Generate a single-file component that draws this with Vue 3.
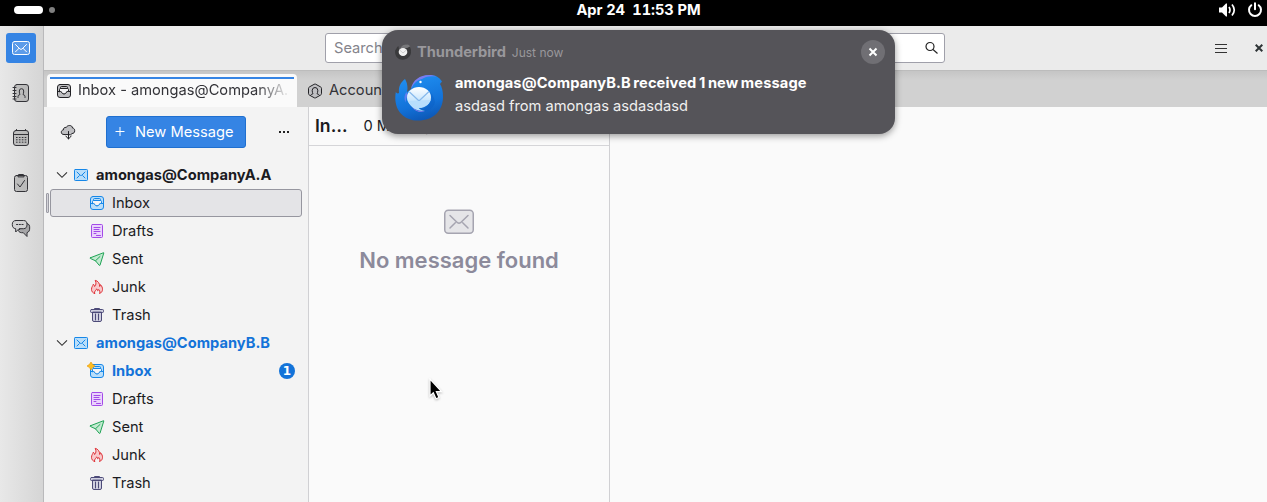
<script setup>
const spaces = [
  { id: 'book', size: 20 },
  { id: 'calendar', size: 20 },
  { id: 'tasks', size: 20 },
  { id: 'chat', size: 20 },
]
const children = (unread) => [
  { name: 'Inbox', icon: unread ? 'inbox-new' : 'inbox', tone: 'blue', unread },
  { name: 'Drafts', icon: 'draft', tone: 'purple' },
  { name: 'Sent', icon: 'sent', tone: 'green' },
  { name: 'Junk', icon: 'junk', tone: 'red' },
  { name: 'Trash', icon: 'trash', tone: 'slate' },
]
const accounts = [
  { name: 'amongas@CompanyA.A', unread: false, folders: children(0) },
  { name: 'amongas@CompanyB.B', unread: true, folders: children(1) },
]
</script>

<template>
  <div class="screen">
    <svg class="defs" aria-hidden="true">
      <symbol id="mail" viewBox="0 0 16 16"><rect x="1.5" y="2.5" width="13" height="11" rx=".8" /><path class="nf" d="M4 5l3.3 3.3q.7.6 1.4 0L12 5M4 11l2.3-2.3M12 11L9.700 8.700" /></symbol>
      <symbol id="mail-lg" viewBox="0 0 20 20"><rect x="1.500" y="3.500" width="17" height="13" rx="2" /><path class="nf" d="M4.500 6.500l4.500 4.500q1 .8 2 0l4.500-4.500M4.500 13.800l3.500-3.500M15.500 13.800L12 10.300" /></symbol>
      <symbol id="inbox" viewBox="0 0 16 16"><rect x="1.500" y="1.500" width="13" height="13" rx="2.500" /><path class="nf" d="M1.500 8.500h3.300c.5 0 .7.300.8.800.5 2 4.300 2 4.800 0 .1-.5.300-.8.800-.8h3.300" /><path class="in" d="M3.500 8.500V6.500q0-1 1-1h7q1 0 1 1v2h-1.300c-.5 0-.7.300-.8.800-.5 2-4.300 2-4.800 0-.1-.5-.3-.8-.8-.8z" /><path class="nf" d="M4.500 5.300v-.8q0-1 1-1h5q1 0 1 1v.8" /></symbol>
      <symbol id="draft" viewBox="0 0 16 16"><rect x="2.500" y="1.500" width="11" height="13" rx="1" /><path class="nf" d="M5 4.500h6M5 6.500h5M5 8.500h6M5 10.500h2M7.500 12.500h4" /></symbol>
      <symbol id="sent" viewBox="0 0 16 16"><path d="M1.300 6.800L14.600 1.700q.2 0 .2.300L11 14.200q-.2.500-.7.200L6.500 9.800 1.500 7.500q-.5-.300-.2-.7zM6.500 9.800L11 5.500" /></symbol>
      <symbol id="junk" viewBox="0 0 16 16"><path d="M5.500 14.500C3.500 13.800 2.500 12.300 2.500 10.300c0-2.300 1.300-3.100 1.800-5.100.9.600 1.200 1.300 1.300 2.300C7 6 7.500 4.300 6.200 1.300c2.700.7 4.600 3 4.500 6.200.6-.5.800-1.100.8-1.900 1.500 1.700 2 3.200 2 4.700 0 2-1 3.500-3 4.200.8-1.800.2-3.200-.8-4-.2.700-.5 1.100-1 1.300-.1-1-.5-1.600-1.100-2 .1 1.600-2.900 2-2.100 4.700z" /></symbol>
      <symbol id="trash" viewBox="0 0 16 16"><path d="M3.500 5.500v7.500q0 1.500 1.500 1.500h6q1.500 0 1.500-1.500V5.500zM2.500 2.500h11q1 0 1 1v1q0 1-1 1h-11q-1 0-1-1v-1q0-1 1-1zM5.500 2.500v-1h5v1M6.500 7v6M9.500 7v6" /></symbol>
      <symbol id="book" viewBox="0 0 20 20"><rect x="3.500" y="1.500" width="14" height="17" rx="2.500" /><path class="nf" d="M2 4.500h3M2 7.500h3M2 10.500h3M2 13.500h3M2 16h3" /><path class="nf" d="M7 14.500v-1q0-1.500 2-2Q8.300 10.500 8.300 8q0-2.300 2.200-2.300T12.700 8q0 2.500-.7 3.500 2 .5 2 2v1" /></symbol>
      <symbol id="calendar" viewBox="0 0 20 20"><rect x="2.500" y="2.500" width="15" height="15" rx="2.500" /><path class="nf" d="M2.500 6.500h15M5.500 1.500v1M14.500 1.500v1" /><path class="nf dots" d="M5 9.500h10.500M5 11.800h10.500M5 14.200h10.500" /></symbol>
      <symbol id="tasks" viewBox="0 0 20 20"><rect x="3.500" y="2.500" width="13" height="16" rx="2" /><path d="M7 3.500v-1q0-1 1-1h4q1 0 1 1v1z" /><path class="nf" d="M6.500 11l2.500 3 4.500-6.500" /></symbol>
      <symbol id="chat" viewBox="0 0 20 20"><path class="dark" d="M16 5.500c2.300.6 2.700 2 2.700 4.500 0 2.700-.8 4-2.700 4.600V18.500l-3.700-3.800c-2.600.2-4.100-.3-4.800-1.800z" /><path class="front" d="M5 2.500h7.500c2.600 0 3.500 1.500 3.500 4s-1 4.200-3.500 4.200H8L4.700 14v-3.300C2.300 10.500 1.300 9 1.300 6.500s1-4 3.700-4z" /><path class="nf" d="M5.500 6.500h1.200M8.200 6.500h1.200M10.900 6.500h1.200" /></symbol>
      <symbol id="cloud" viewBox="0 0 16 16"><path d="M5.500 10.500H4C2.300 10.500 1.300 9.700 1.300 8.200c0-1.300.8-2 2-2.200C3.300 4 4.500 3.200 6.300 3.400 7.200.9 12.300.6 12.500 4c1.600.3 2.200 1.200 2.200 2.700 0 1.900-1 2.800-2.700 2.800l-1 1z" /><path class="nf" d="M8.500 7.500V15M5.800 12l2.700 3 2.700-3" /></symbol>
      <symbol id="account" viewBox="0 0 16 16"><path d="M7.300 1.200q.7-.4 1.400 0l5 2.800q.8.500.8 1.300v5.400q0 .8-.8 1.300l-5 2.800q-.7.400-1.400 0L2.300 12q-.8-.5-.8-1.300V5.300q0-.8.800-1.300z" /><path d="M3.500 12.500q.5-1.300 2.500-1.800Q5.200 9.700 5.200 7.200 5.500 4.500 8 4.500t2.800 2.700q0 2.500-.8 3.500 2 .5 2.500 1.800" /></symbol>
    </svg>

    <header class="system">
      <div class="workspaces"><i class="pill"></i><i class="dot"></i></div>
      <span class="clock">Apr 24&ensp;11:53 PM</span>
      <div class="status">
        <svg width="18" height="16" viewBox="0 0 18 16"><path fill="#fff" d="M0 5.500h3L7 1.500h1v13H7l-4-4H0z" /><path fill="none" stroke="#fff" stroke-width="1.700" d="M10 5q2 3 0 6M13 2.500q4.500 5.500 0 11" /></svg>
        <svg width="16" height="16" viewBox="0 0 16 16"><path fill="none" stroke="#fff" stroke-width="2" stroke-linecap="round" d="M8 1.300v6M4.300 3.200a6 6 0 1 0 7.400 0" /></svg>
      </div>
    </header>

    <div class="body">
      <nav class="spaces">
        <div class="space active"><svg class="ic" width="20" height="20"><use href="#mail-lg" /></svg></div>
        <div v-for="s in spaces" :key="s.id" class="space"><svg class="ic" :width="s.size" :height="s.size"><use :href="'#' + s.id" /></svg></div>
      </nav>

      <div class="main">
        <div class="toolbar">
          <div class="search">
            <span>Search…</span>
            <svg width="14" height="14" viewBox="0 0 14 14"><g fill="none" stroke="#222" stroke-width="1.200"><circle cx="6" cy="5.500" r="4" /><path d="M9 8.500l4.500 4" /></g></svg>
          </div>
          <svg class="menu" width="12" height="11" viewBox="0 0 12 11"><path stroke="#333" d="M0 1.500h12M0 5.500h12M0 9.500h12" /></svg>
          <svg class="close" width="8" height="8" viewBox="0 0 8 8"><path stroke="#2e3436" stroke-width="2" d="M.7.700l6.600 6.600M7.300.700L.7 7.300" /></svg>
        </div>

        <div class="tabs">
          <div class="tab current">
            <svg class="ic gray" width="16" height="16"><use href="#inbox" /></svg>
            <span class="title">Inbox - amongas@CompanyA.</span>
          </div>
          <div class="tab">
            <svg class="ic gray" width="16" height="16"><use href="#account" /></svg>
            <span>Account Settings</span>
          </div>
        </div>

        <div class="panes">
          <section class="folders">
            <div class="actions">
              <svg class="ic gray" width="16" height="16"><use href="#cloud" /></svg>
              <button class="compose">
                <svg width="10" height="10" viewBox="0 0 10 10"><path stroke="#fff" d="M.5 4.500h9M5 0v9" /></svg>
                <span>New Message</span>
              </button>
              <svg class="more" width="12" height="4" viewBox="0 0 12 4"><path fill="#222" d="M1 1h2v2H1zM5 1h2v2H5zM9 1h2v2H9z" /></svg>
            </div>
            <template v-for="(a, i) in accounts" :key="a.name">
              <div class="row root" :class="{ fresh: a.unread }">
                <svg class="chev" width="12" height="8" viewBox="0 0 12 8"><path fill="none" stroke="#333" stroke-width="1.100" d="M1 1.300l5 5 5-5" /></svg>
                <svg class="ic blue" width="16" height="16"><use href="#mail" /></svg>
                <span>{{ a.name }}</span>
              </div>
              <div v-for="(f, j) in a.folders" :key="f.name" class="row" :class="{ selected: i === 0 && j === 0, fresh: f.unread }">
                <svg v-if="f.icon !== 'inbox-new'" class="ic" :class="f.tone" width="16" height="16"><use :href="'#' + f.icon" /></svg>
                <svg v-else class="ic blue new" width="18" height="18" viewBox="-2 -1 18 18"><use href="#inbox" width="16" height="16" /><path class="spark" d="M2-1q.9 2.800 4 4Q2.900 4.200 2 7 1.100 4.200-2 3 1.100 1.800 2-1z" /></svg>
                <span>{{ f.name }}</span>
                <b v-if="f.unread" class="badge">{{ f.unread }}</b>
              </div>
            </template>
          </section>

          <section class="messages">
            <div class="head"><strong>In…</strong><span>0 Messages</span></div>
            <div class="empty">
              <svg class="ic" width="30" height="26" viewBox="0 0 30 26"><rect x=".75" y="1.250" width="28.500" height="23" rx="3.500" /><path class="nf" d="M6 6.500l7.500 7.200q1.500 1.100 3 0L24 6.500M6 19l5.300-5.300M24 19l-5.300-5.300" /></svg>
              <p>No message found</p>
            </div>
          </section>
          <section class="preview"></section>
        </div>
      </div>
    </div>

    <aside class="toast">
      <div class="toast-head">
        <svg width="16" height="16" viewBox="0 0 48 48"><path fill="#3a3a3c" d="M10 6C3 12 4 18 1 17c-4 17 7 30 22 30 19 0 29-16 24-33l-3-7C38-1 20 0 15 15c-4 3-3-4-5-9z" /><path fill="#77777a" d="M15 15C20 2 30 1 40 2l6 5-8 4-12 3z" /><ellipse cx="24" cy="24" rx="13" ry="12" fill="#f2f2f2" /><path fill="none" stroke="#bbb" stroke-width="2" d="M14 18l10 9 10-9" /></svg>
        <strong>Thunderbird</strong><span>Just now</span>
        <div class="dismiss"><svg width="10" height="10" viewBox="0 0 10 10"><path stroke="#fff" stroke-width="2" d="M1.500 1.500l7 7M8.500 1.500l-7 7" /></svg></div>
      </div>
      <div class="toast-body">
        <svg width="48" height="48" viewBox="0 0 48 48">
          <defs>
            <linearGradient id="wing" x1=".3" y1="0" x2=".6" y2="1"><stop offset="0" stop-color="#2090f2" /><stop offset=".65" stop-color="#1272d9" /><stop offset="1" stop-color="#0d57b5" /></linearGradient>
            <linearGradient id="letter" x1="0" y1="0" x2="0" y2="1"><stop offset="0" stop-color="#fff" /><stop offset="1" stop-color="#a9d8fc" /></linearGradient>
          </defs>
          <path fill="url(#wing)" d="M10 5C5 9 3.500 13 4 19 2.500 20 1.500 19 .8 18-2 34 7 46.500 23 46.500 39 46.500 48 36 48 23 48 17 47 13 45 10l2-2.500C44 3 40 1 35 1 26 1 18 7 16 15l-4 3c1-4 .5-9-2-13z" />
          <path fill="#7a7cf0" d="M16 15C17.500 6 25 1 34 1c3 0 5 .5 7 1.500C34 1.500 30 3 27 5c-5 1-8 4-11 10z" />
          <path fill="#5d7df0" d="M11.500 18c-2.500 3-2.500 7-1 10.500.3-3 1-5 2.500-7.500z" />
          <path fill="#0c5fc6" d="M35 18c4 8-1 18-13 19 8 2 16-1 18-9-1-4-2-7-5-10z" opacity=".5" />
          <ellipse cx="24" cy="23.500" rx="12" ry="10.500" fill="url(#letter)" />
          <path fill="#b8defc" d="M13 27c3 7 8 10 17 10-4-1-6-2-6.500-3.500C30 33.500 34 30 35.500 26z" />
          <path fill="#8a7cf0" d="M17 33c3 3 7 5 13 4-3 2-10 1-13-4z" />
          <path fill="none" stroke="#86b9ec" stroke-width="1.200" d="M14.500 18l8.500 8q1 .8 2 0l9-8.500" />
          <circle cx="25.500" cy="8" r="1.200" fill="#fff" />
        </svg>
        <div class="copy"><strong>amongas@CompanyB.B received 1 new message</strong><span>asdasd from amongas asdasdasd</span></div>
      </div>
    </aside>

    <svg class="cursor" width="14" height="23" viewBox="0 0 14 23"><path fill="#000" stroke="#fff" stroke-width="1.200" d="M1 1v17l3.300-3.200 2.700 6 3-1.300-2.600-5.800H12.500z" /></svg>
  </div>
</template>

<style>
body { margin: 0; overflow: hidden; }
</style>

<style scoped>
.screen { position: relative; width: 1267px; height: 502px; overflow: hidden; display: flex; flex-direction: column; background: #fafafa; color: #1b1b1f; font: 14.667px/20px Inter, sans-serif; }
.defs { position: absolute; width: 0; height: 0; }
svg { flex: none; display: block; }
.ic { stroke: #333338; fill: #3333; stroke-linejoin: round; stroke-linecap: round; }
.ic.gray { stroke: #222226; fill: #bfbfc2; }
.ic.blue { stroke: #1687e8; fill: #b9defa; }
.ic.purple { stroke: #a34ae8; fill: #ead3fc; }
.ic.green { stroke: #1fa355; fill: #c3ead1; }
.ic.red { stroke: #df3238; fill: #f8c9cb; }
.ic.slate { stroke: #4c4a78; fill: #cfcfdf; }
.nf { fill: none; }
.in { fill: #f4f4f6; }
.dots { stroke-dasharray: 1.600 1.300; stroke-linecap: butt; }
.dark { fill: #a6a6a8; }
.front { fill: #d2d2d3; }

.system { flex: none; height: 26px; background: #000; color: #fff; display: grid; grid-template-columns: 1fr auto 1fr; align-items: center; padding: 0 4px 0 14px; box-sizing: border-box; }
.workspaces { display: flex; align-items: center; gap: 6px; padding-bottom: 6px; }
.pill { width: 29px; height: 8px; border-radius: 4px; background: #fff; }
.dot { width: 6px; height: 6px; border-radius: 50%; background: #808080; }
.clock { font-weight: 700; font-variant-numeric: tabular-nums; letter-spacing: -.07px; padding-bottom: 6px; }
.status { justify-self: end; display: flex; gap: 10px; padding-bottom: 6px; }

.body { flex: 1; display: flex; min-height: 0; }
.spaces { flex: none; width: 43px; box-sizing: border-box; background: linear-gradient(90deg, #e8e8e8, #d5d5d5); display: flex; flex-direction: column; align-items: center; gap: 15px; padding: 7px 1px 0 0; }
.space { width: 30px; height: 30px; border-radius: 3px; display: flex; align-items: center; justify-content: center; }
.active { background: #3584e4; }
.active .ic { stroke: #fff; fill: #fff3; }
.main { flex: 1; min-width: 0; display: flex; flex-direction: column; border-left: 1px solid #b9b9bb; }
.toolbar { flex: none; height: 45px; box-sizing: border-box; background: #ebebeb; border-bottom: 1px solid #bcbcbc; display: flex; align-items: center; padding-left: 281px; }
.search { width: 620px; height: 30px; box-sizing: border-box; border: 1px solid #a0a0aa; border-radius: 3px; background: #fff; color: #84848c; display: flex; align-items: center; justify-content: space-between; padding: 0 6px 0 8px; }
.menu { margin-left: 270px; }
.close { margin-left: 28px; }
.tabs { flex: none; height: 36px; background: linear-gradient(#c5c5c5, #d1d1d1 9px); display: flex; padding-left: 3px; align-items: flex-end; }
.tab { height: 33px; box-sizing: border-box; display: flex; align-items: center; gap: 6px; padding-left: 10px; color: #333338; white-space: nowrap; }
.tab span { padding-bottom: 1px; }
.current { width: 250px; background: linear-gradient(#3584e4, #3584e4) 3px 3px / 244px 2px no-repeat #fafafa; border-radius: 4px 4px 0 0; padding-right: 9px; padding-left: 9px; }
.title { flex: 1; min-width: 0; mask-image: linear-gradient(90deg, #000 178px, transparent 212px); }
.panes { flex: 1; min-height: 0; display: flex; }
.folders { flex: none; width: 264px; background: #f3f3f3; border-right: 1px solid #d0d0d3; }
.actions { height: 54px; box-sizing: border-box; display: flex; align-items: center; padding: 0 18px 4px 16px; }
.compose { margin-left: 30px; width: 140px; height: 32px; box-sizing: border-box; padding: 0 0 0 8px; border: 1px solid #1f6fcf; border-radius: 3px; background: #3584e4; color: #fff; font: inherit; display: flex; align-items: center; gap: 10px; }
.more { margin-left: 32px; }
.row { height: 28px; margin: 0 6px; padding: 0 6px 0 38px; border: 1px solid transparent; border-radius: 3px; box-sizing: border-box; display: flex; align-items: center; gap: 7px; position: relative; white-space: nowrap; }
.root { padding-left: 5px; font-weight: 700; }
.root .chev { margin-right: -2px; }
.fresh { color: #1373d9; font-weight: 700; }
.selected { background: #e4e4e7; border-color: #96969f; }
.selected::before { content: ""; position: absolute; left: -5px; top: 3px; width: 1px; height: 18px; border: 1px solid #9b9ba4; border-radius: 1px; background: #d5d5da; }
.new { margin-left: -2px; }
.spark { fill: #ffbd21; stroke: #e89700; stroke-width: .6; }
.badge { margin-left: auto; width: 16px; height: 16px; border-radius: 50%; background: #1373d9; color: #fff; font-family: "DejaVu Sans", sans-serif; font-size: 12px; line-height: 16px; text-align: center; }
.messages { flex: none; width: 300px; border-right: 1px solid #d0d0d3; background: #fafafa; }
.head { height: 39px; box-sizing: border-box; border-bottom: 1px solid #d5d5d8; padding-left: 6px; display: flex; align-items: center; gap: 16px; }
.head strong { font-size: 17.600px; font-weight: 600; }
.empty { display: flex; flex-direction: column; align-items: center; padding-top: 63px; color: #8c8a9b; }
.empty .ic { stroke: #a5a4b0; fill: #e5e5e8; stroke-width: 1.500; }
.empty p { margin: 11px 0 0; font-size: 22px; line-height: 28px; font-weight: 600; }
.preview { flex: 1; background: #fafafa; }

.toast { position: absolute; left: 382px; top: 30px; width: 513px; height: 104px; box-sizing: border-box; border-radius: 16px; background: #555459; box-shadow: 0 2px 7px #0006; color: #fff; }
.toast-head { height: 44px; display: flex; align-items: center; padding: 0 10px 0 13px; color: #99989c; }
.toast-head strong { margin: 0 6px 0 6px; font-weight: 700; letter-spacing: -.05px; }
.toast-head span { font-size: 12px; padding-top: 1px; }
.dismiss { margin-left: auto; width: 24px; height: 24px; border-radius: 50%; background: #706f74; display: flex; align-items: center; justify-content: center; }
.toast-body { display: flex; gap: 12px; padding-left: 13px; }
.copy { display: flex; flex-direction: column; gap: 3px; margin-top: -1px; white-space: nowrap; }
.copy strong { font-weight: 700; letter-spacing: .1px; word-spacing: -1px; }
.copy span { color: #f0f0f0; }
.cursor { position: absolute; left: 429px; top: 378px; filter: drop-shadow(0 1px 1px #0004); }
</style>
